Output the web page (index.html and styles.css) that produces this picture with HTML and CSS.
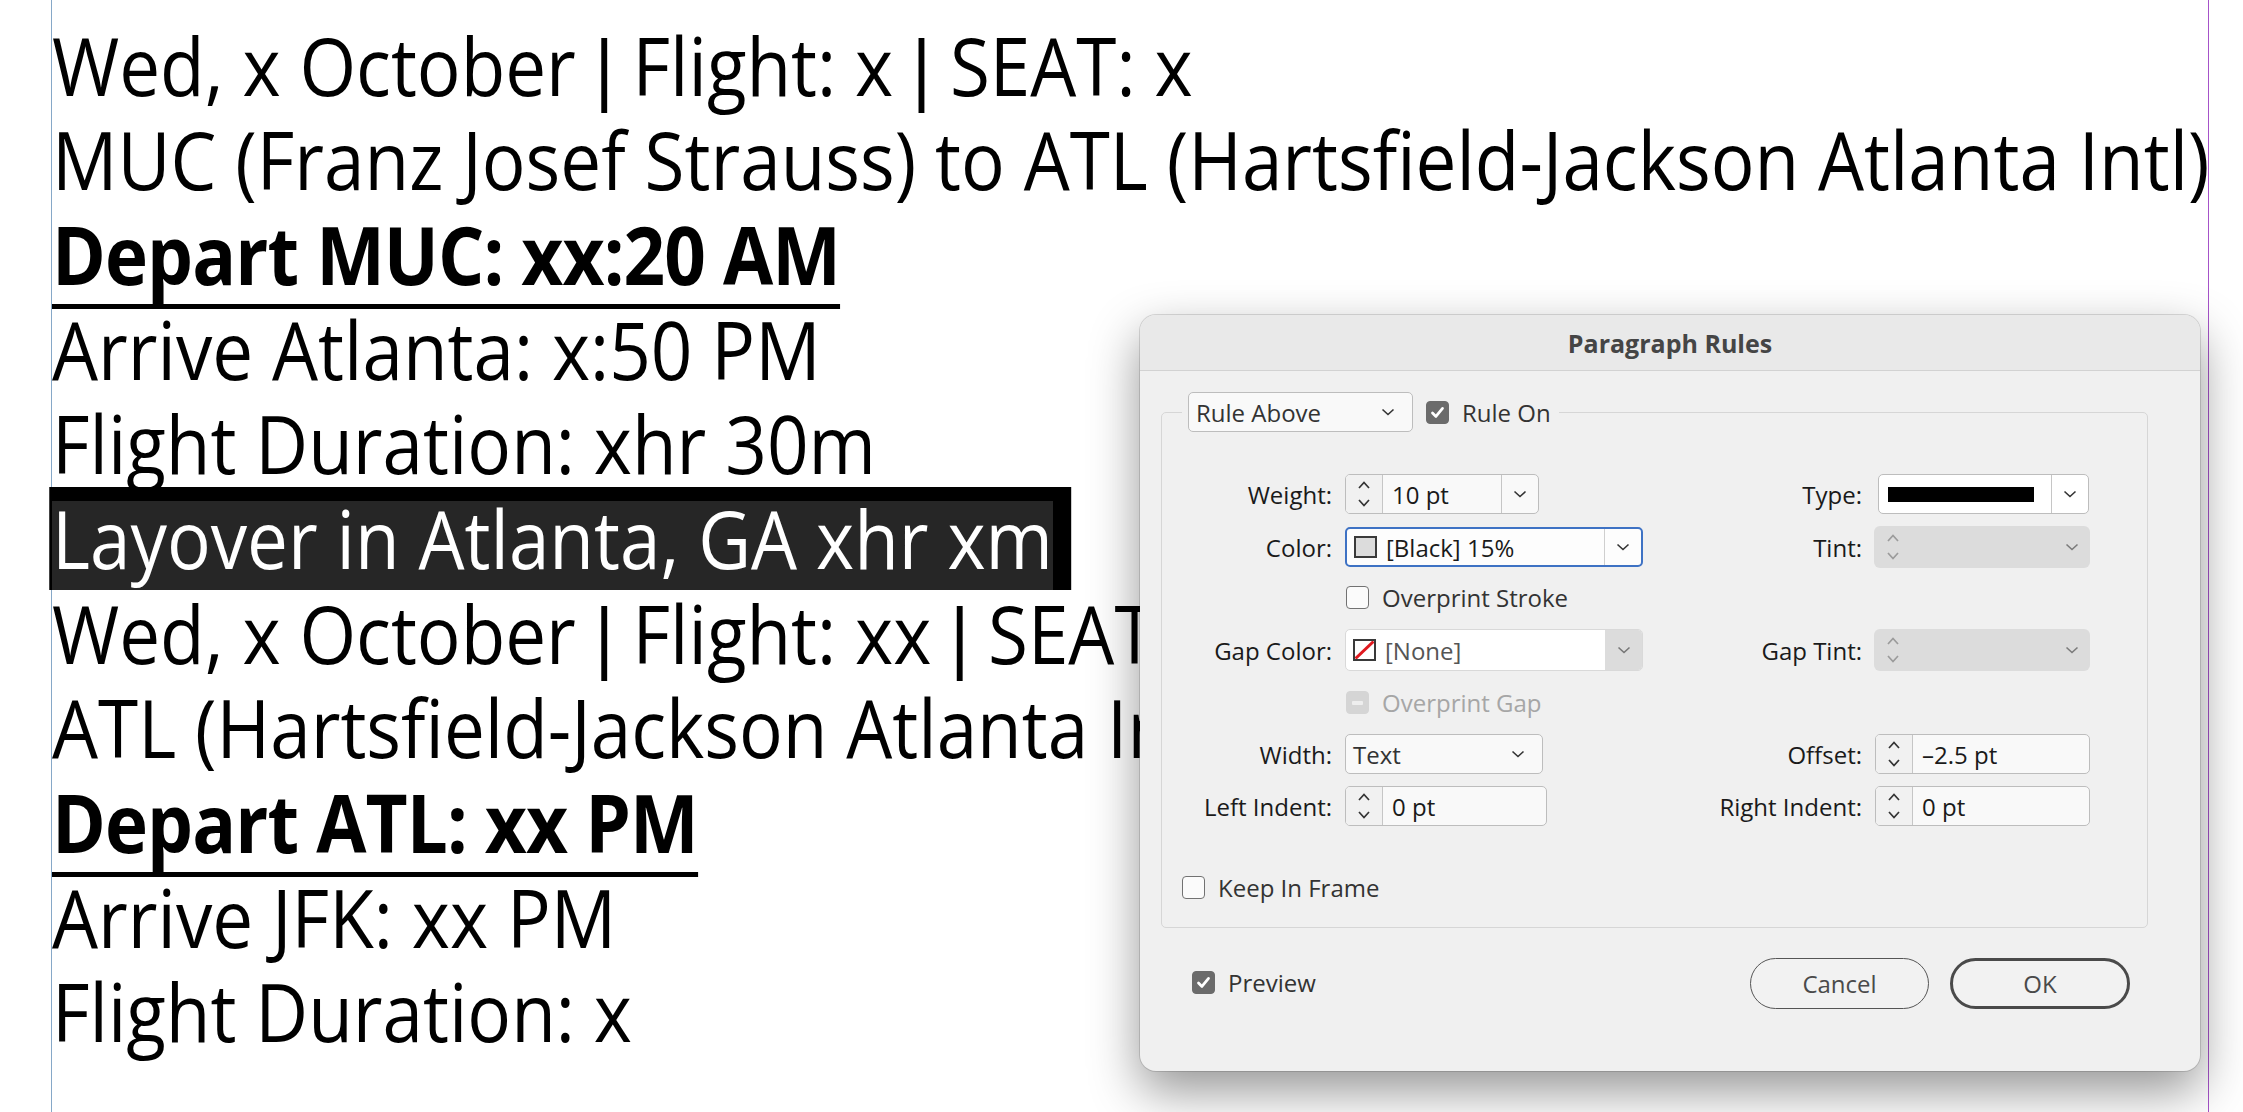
FILE: index.html
```html
<!DOCTYPE html>
<html lang="en">
<head>
<meta charset="utf-8">
<title>Paragraph Rules</title>
<link rel="stylesheet" href="styles.css">
</head>
<body>
<div class="page">
  <div class="doc">
    <p class="ln">Wed, x October <span class="bar">|</span> Flight: x <span class="bar">|</span> SEAT: x</p>
    <p class="ln">MUC (Franz Josef Strauss) to ATL (Hartsfield-Jackson Atlanta Intl)</p>
    <p class="ln"><span class="bold ruled">Depart MUC: xx:20 AM</span></p>
    <p class="ln">Arrive Atlanta: x:50 PM</p>
    <p class="ln">Flight Duration: xhr 30m</p>
    <p class="ln"><span class="sel">Layover in Atlanta, GA xhr xm</span></p>
    <p class="ln">Wed, x October <span class="bar">|</span> Flight: xx <span class="bar">|</span> SEAT</p>
    <p class="ln">ATL (Hartsfield-Jackson Atlanta Intl)</p>
    <p class="ln"><span class="bold ruled">Depart ATL: xx PM</span></p>
    <p class="ln">Arrive JFK: xx PM</p>
    <p class="ln">Flight Duration: x</p>
  </div>
</div>

<div class="dialog">
  <div class="titlebar">Paragraph Rules</div>
  <div class="dbody">
    <fieldset class="group">
      <legend class="legend">
        <div class="legend-in">
          <div class="field select rule-sel"><span class="val">Rule Above</span><svg class="chev" viewBox="0 0 14 8"><path d="M1.5 1.5 L7 6.5 L12.5 1.5"/></svg></div>
          <span class="cb on"><svg class="tick" viewBox="0 0 23 23"><path d="M6 12 L9.8 15.8 L17 7"/></svg></span>
          <span class="cb-text">Rule On</span>
        </div>
      </legend>

      <div class="row">
        <div class="lbl">Weight:</div>
        <div class="field spinner w-weight">
          <span class="spin"><svg class="ud" viewBox="0 0 16 28"><path d="M3 8 L8 2.5 L13 8 M3 20 L8 25.5 L13 20"/></svg></span>
          <span class="val">10 pt</span>
          <span class="drop"><svg class="chev" viewBox="0 0 14 8"><path d="M1.5 1.5 L7 6.5 L12.5 1.5"/></svg></span>
        </div>
        <div class="lbl2">Type:</div>
        <div class="field typefield">
          <span class="typebar"></span><span class="fill"></span>
          <span class="drop"><svg class="chev" viewBox="0 0 14 8"><path d="M1.5 1.5 L7 6.5 L12.5 1.5"/></svg></span>
        </div>
      </div>

      <div class="row mt12">
        <div class="lbl">Color:</div>
        <div class="field focus w-full">
          <span class="swatch gray"></span>
          <span class="val sw-val">[Black] 15%</span>
          <span class="drop"><svg class="chev" viewBox="0 0 14 8"><path d="M1.5 1.5 L7 6.5 L12.5 1.5"/></svg></span>
        </div>
        <div class="lbl2">Tint:</div>
        <div class="field disabled">
          <span class="spin-d"><svg class="ud" viewBox="0 0 16 28"><path d="M3 8 L8 2.5 L13 8 M3 20 L8 25.5 L13 20"/></svg></span>
          <span class="fill"></span>
          <span class="drop-d"><svg class="chev" viewBox="0 0 14 8"><path d="M1.5 1.5 L7 6.5 L12.5 1.5"/></svg></span>
        </div>
      </div>

      <div class="row tall">
        <div class="lbl"></div>
        <div class="check c2"><span class="cb"></span><span class="cb-text">Overprint Stroke</span></div>
      </div>

      <div class="row h42">
        <div class="lbl">Gap Color:</div>
        <div class="field gapfield w-full">
          <span class="swatch none"><svg viewBox="0 0 19 18"><line x1="0.5" y1="17.5" x2="18.5" y2="0.5"/></svg></span>
          <span class="val sw-val muted">[None]</span>
          <span class="drop-g"><svg class="chev" viewBox="0 0 14 8"><path d="M1.5 1.5 L7 6.5 L12.5 1.5"/></svg></span>
        </div>
        <div class="lbl2">Gap Tint:</div>
        <div class="field disabled">
          <span class="spin-d"><svg class="ud" viewBox="0 0 16 28"><path d="M3 8 L8 2.5 L13 8 M3 20 L8 25.5 L13 20"/></svg></span>
          <span class="fill"></span>
          <span class="drop-d"><svg class="chev" viewBox="0 0 14 8"><path d="M1.5 1.5 L7 6.5 L12.5 1.5"/></svg></span>
        </div>
      </div>

      <div class="row tall">
        <div class="lbl"></div>
        <div class="check c2 dim"><span class="cb dis"><span class="dash"></span></span><span class="cb-text">Overprint Gap</span></div>
      </div>

      <div class="row">
        <div class="lbl">Width:</div>
        <div class="field select w-width"><span class="val">Text</span><svg class="chev" viewBox="0 0 14 8"><path d="M1.5 1.5 L7 6.5 L12.5 1.5"/></svg></div>
        <div class="lbl2">Offset:</div>
        <div class="field spinner w-right">
          <span class="spin"><svg class="ud" viewBox="0 0 16 28"><path d="M3 8 L8 2.5 L13 8 M3 20 L8 25.5 L13 20"/></svg></span>
          <span class="val">–2.5 pt</span>
        </div>
      </div>

      <div class="row mt12">
        <div class="lbl">Left Indent:</div>
        <div class="field spinner w-indent">
          <span class="spin"><svg class="ud" viewBox="0 0 16 28"><path d="M3 8 L8 2.5 L13 8 M3 20 L8 25.5 L13 20"/></svg></span>
          <span class="val">0 pt</span>
        </div>
        <div class="lbl2">Right Indent:</div>
        <div class="field spinner w-right">
          <span class="spin"><svg class="ud" viewBox="0 0 16 28"><path d="M3 8 L8 2.5 L13 8 M3 20 L8 25.5 L13 20"/></svg></span>
          <span class="val">0 pt</span>
        </div>
      </div>

      <div class="check keep"><span class="cb"></span><span class="cb-text">Keep In Frame</span></div>
    </fieldset>

    <div class="footer">
      <div class="check preview"><span class="cb on"><svg class="tick" viewBox="0 0 23 23"><path d="M6 12 L9.8 15.8 L17 7"/></svg></span><span class="cb-text">Preview</span></div>
      <div class="buttons">
        <button class="btn">Cancel</button>
        <button class="btn ok">OK</button>
      </div>
    </div>
  </div>
</div>
</body>
</html>
```

FILE: styles.css
```css
html, body {
  margin: 0;
  padding: 0;
}
body {
  width: 2243px;
  height: 1112px;
  overflow: hidden;
  background: #ffffff;
  position: relative;
}

/* document canvas with guides */
.page {
  margin-left: 51px;
  width: 2156px;
  height: 1112px;
  border-left: 1px solid #86a8c8;
  border-right: 1px solid #a652c9;
}
.doc {
  padding-top: 17.6px;
  font-family: "Open Sans", "Noto Sans", sans-serif;
  font-size: 80px;
  line-height: 94.67px;
  color: #000;
  white-space: nowrap;
  transform: scaleX(0.91);
  transform-origin: 0 0;
}
.ln {
  margin: 0;
}
.bar {
  font-family: "Liberation Sans", sans-serif;
  line-height: 0;
}
.bold {
  font-weight: 700;
  letter-spacing: -1px;
}
.ruled {
  padding-bottom: 4px;
  background: linear-gradient(#000, #000) no-repeat 0 105px / 100% 5px;
}
.sel {
  display: inline-block;
  vertical-align: top;
  height: 103px;
  line-height: 102.6px;
  margin: -4px 0 -4.3px -3px;
  padding: 0 20px 0 3px;
  color: #fff;
  background: linear-gradient(#262626, #262626) no-repeat 3px 14px / calc(100% - 23px) 89px, #000;
}

/* dialog */
.dialog {
  position: absolute;
  left: 1140px;
  top: 315px;
  width: 1060px;
  height: 756px;
  box-sizing: border-box;
  background: #f0f0f0;
  border-radius: 16px;
  box-shadow: 0 0 0 1px rgba(0, 0, 0, 0.13), 0 20px 50px rgba(0, 0, 0, 0.42);
  font-family: "Open Sans", "Noto Sans", sans-serif;
  font-size: 24px;
  color: #1a1a1a;
}
.titlebar {
  height: 55px;
  border-bottom: 1px solid #d2d2d2;
  background: #e9e9e9;
  border-radius: 16px 16px 0 0;
  display: flex;
  align-items: center;
  justify-content: center;
  font-size: 25px;
  font-weight: 700;
  color: #454545;
}
.dbody {
  padding-top: 21px;
}
.group {
  margin: 0 52px 0 21px;
  padding: 42px 0 28px 0;
  min-width: 0;
  border: 1.5px solid #d6d6d6;
  border-radius: 5px;
}
.legend {
  margin-left: 20px;
  padding: 0 8px 0 6px;
}
.legend-in {
  display: flex;
  align-items: center;
  gap: 13px;
}

.row {
  display: grid;
  grid-template-columns: 183px 298px 231px 216px;
  align-items: center;
  height: 40px;
}
.row.mt12 { margin-top: 12px; }
.row.tall { height: 63px; }
.row.h42 { height: 42px; }
.lbl {
  text-align: right;
  padding-right: 13px;
  white-space: nowrap;
}
.lbl2 {
  text-align: right;
  padding-right: 12px;
  white-space: nowrap;
}
.c2 { grid-column: 2 / span 2; }

/* fields */
.field {
  display: flex;
  align-items: center;
  box-sizing: border-box;
  height: 40px;
  border: 1.5px solid #bdbdbd;
  border-radius: 5px;
  background: #f9f9f9;
  white-space: nowrap;
}
.val {
  padding-left: 8px;
  flex: 1;
}
.fill { flex: 1; }
.select .val { color: #333; padding-left: 7px; }
.select .chev { margin-right: 17px; }
.rule-sel { width: 225px; }
.w-width { width: 198px; }
.w-weight { width: 194px; }
.w-indent { width: 202px; }
.w-full { width: 298px; }
.w-right { width: 215px; margin-left: 1px; }

.spin {
  align-self: stretch;
  width: 36px;
  flex: none;
  display: flex;
  align-items: center;
  justify-content: center;
  background: #f1f1f1;
  border-right: 1.5px solid #c6c6c6;
  border-radius: 4px 0 0 4px;
}
.spinner .val { padding-left: 9px; }
.drop {
  align-self: stretch;
  width: 36px;
  flex: none;
  display: flex;
  align-items: center;
  justify-content: center;
  border-left: 1.5px solid #c6c6c6;
}
.ud {
  width: 16px;
  height: 28px;
  fill: none;
  stroke: #333;
  stroke-width: 1.7;
}
.chev {
  width: 14px;
  height: 8px;
  flex: none;
  fill: none;
  stroke: #333;
  stroke-width: 1.6;
}

.typefield {
  width: 211px;
  margin-left: 4px;
  background: #fff;
}
.typebar {
  width: 146px;
  height: 15px;
  margin-left: 9px;
  background: #000;
  flex: none;
}

.focus {
  height: 40px;
  border: 2px solid #3e72c4;
  background: #fdfdfd;
}
.focus .drop { border-left-color: #cfcfcf; }
.swatch {
  width: 23px;
  height: 22px;
  box-sizing: border-box;
  margin-left: 7px;
  flex: none;
  border: 2px solid #3a3a3a;
}
.swatch.gray { background: #dcdcdc; }
.swatch.none { background: #fff; display: flex; }
.swatch.none svg {
  width: 19px;
  height: 18px;
  stroke: #e0191f;
  stroke-width: 3;
}
.sw-val { padding-left: 9px; }
.muted { color: #555; }

.gapfield {
  height: 42px;
  border: 1.5px solid #d9d9d9;
  background: #fff;
  overflow: hidden;
}
.drop-g {
  align-self: stretch;
  width: 37px;
  flex: none;
  display: flex;
  align-items: center;
  justify-content: center;
  background: #dcdcdc;
}
.drop-g .chev { stroke: #777; }

.disabled {
  width: 216px;
  height: 42px;
  border: none;
  border-radius: 6px;
  background: #dcdcdc;
}
.spin-d {
  width: 16px;
  margin-left: 11px;
  display: flex;
}
.spin-d .ud { stroke: #9b9b9b; }
.drop-d {
  width: 37px;
  display: flex;
  justify-content: center;
}
.drop-d .chev { stroke: #7b7b7b; }

/* checkboxes */
.check {
  display: flex;
  align-items: center;
  gap: 13px;
  color: #333;
  white-space: nowrap;
}
.row .check { margin-left: 1px; }
.cb {
  width: 23px;
  height: 23px;
  box-sizing: border-box;
  border: 1.5px solid #727272;
  border-radius: 4px;
  background: #fbfbfb;
  display: inline-flex;
  align-items: center;
  justify-content: center;
  flex: none;
}
.cb.on {
  background: #6b6b6b;
  border-color: #6b6b6b;
}
.cb.dis {
  background: #d5d5d5;
  border-color: #d5d5d5;
}
.dash {
  width: 11px;
  height: 4px;
  border-radius: 1px;
  background: #eeeeee;
}
.tick {
  width: 23px;
  height: 23px;
  fill: none;
  stroke: #fff;
  stroke-width: 3;
  stroke-linecap: round;
  stroke-linejoin: round;
}
.cb-text { color: #333; }
.dim .cb-text { color: #a6a6a6; }

.keep {
  height: 24px;
  margin: 49px 0 0 20px;
}

/* footer */
.footer {
  display: flex;
  align-items: center;
  height: 51px;
  margin-top: 30px;
  padding: 0 70px 0 52px;
}
.preview {
  align-self: flex-start;
  margin-top: 8px;
}
.buttons {
  margin-left: auto;
  display: flex;
  gap: 21px;
}
.btn {
  width: 179px;
  height: 51px;
  box-sizing: border-box;
  border: 1.5px solid #555;
  border-radius: 26px;
  background: #f2f2f2;
  font-family: inherit;
  font-size: 24px;
  color: #4a4a4a;
  padding: 0;
}
.btn.ok {
  width: 180px;
  border: 3px solid #4a4a4a;
}
```
